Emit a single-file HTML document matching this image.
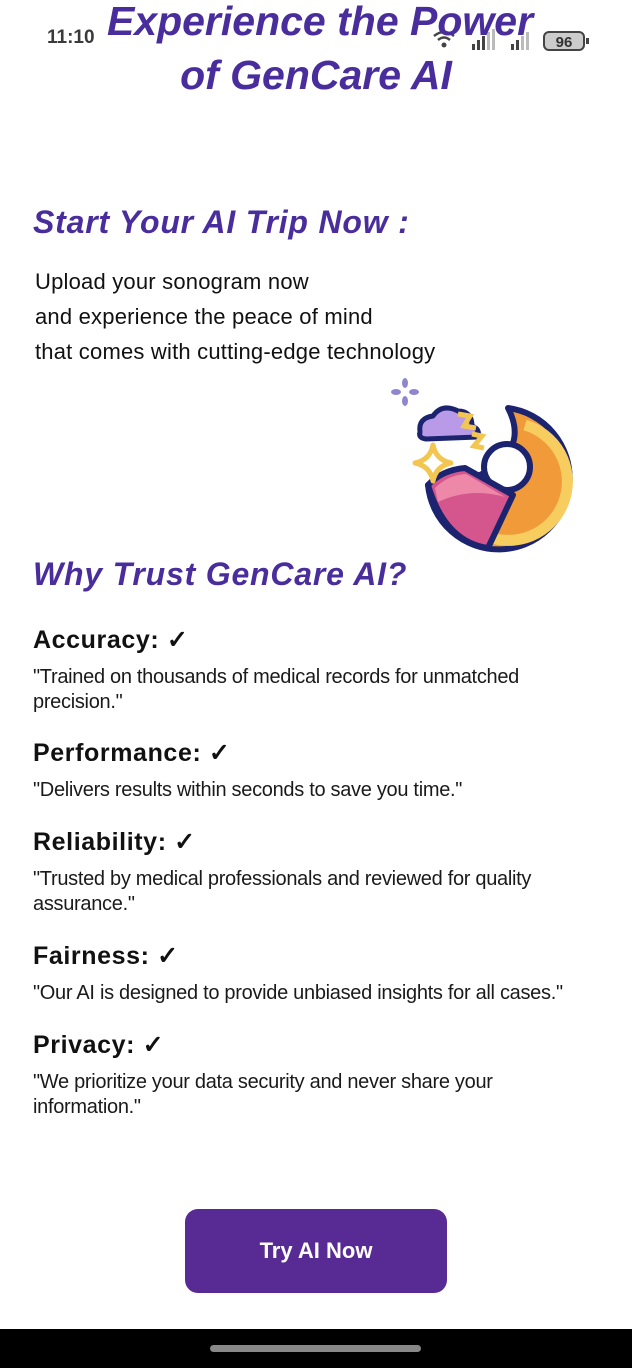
<!DOCTYPE html>
<html><head><meta charset="utf-8"><style>
html,body{margin:0;padding:0;background:#fff;}
body{width:632px;height:1368px;position:relative;overflow:hidden;font-family:"Liberation Sans",sans-serif;}
.a{position:absolute;white-space:nowrap;line-height:1;}
.t{font-weight:bold;font-style:italic;color:#4a2d9c;}
.h{font-weight:bold;color:#111;font-size:25px;left:33px;letter-spacing:0.6px;}
.q{font-size:20px;color:#1a1a1a;left:33px;letter-spacing:-0.3px;}
.b{font-size:22px;color:#111;left:35px;letter-spacing:0.2px;}
</style></head><body>
<div class="a" style="left:47px;top:28px;font-size:19px;font-weight:bold;color:#3a3a3a;">11:10</div>
<svg class="a" style="left:430px;top:26px" width="165" height="28" viewBox="0 0 165 28">
<path d="M4 10 Q14 2 24 10" stroke="#444" stroke-width="2.5" fill="none"/>
<path d="M8 14 Q14 9 20 14" stroke="#444" stroke-width="2.5" fill="none"/>
<circle cx="14" cy="19" r="2.5" fill="#444"/>
<rect x="42" y="18" width="3" height="6" fill="#444"/><rect x="47" y="14" width="3" height="10" fill="#444"/><rect x="52" y="10" width="3" height="14" fill="#444"/><rect x="57" y="6" width="3" height="18" fill="#bbb"/><rect x="62" y="3" width="3" height="21" fill="#bbb"/>
<rect x="81" y="18" width="3" height="6" fill="#444"/><rect x="86" y="14" width="3" height="10" fill="#444"/><rect x="91" y="10" width="3" height="14" fill="#bbb"/><rect x="96" y="6" width="3" height="18" fill="#bbb"/>
<rect x="114" y="6" width="40" height="18" rx="5" fill="#ccc" stroke="#444" stroke-width="2"/>
<text x="134" y="21" text-anchor="middle" font-family="Liberation Sans" font-size="15" font-weight="bold" fill="#333">96</text>
<rect x="156" y="12" width="3" height="6" fill="#444"/>
</svg>
<div class="a t" style="left:0;width:632px;text-align:center;top:1px;font-size:41px;padding-left:4px;">Experience the Power</div>
<div class="a t" style="left:0;width:632px;text-align:center;top:55px;font-size:41px;">of GenCare AI</div>
<div class="a t" style="left:33px;top:206px;font-size:32px;letter-spacing:0.8px;">Start Your AI Trip Now :</div>
<div class="a b" style="top:271px;">Upload your sonogram now</div>
<div class="a b" style="top:306px;">and experience the peace of mind</div>
<div class="a b" style="top:341px;">that comes with cutting-edge technology</div>
<svg class="a" style="left:380px;top:370px" width="200" height="190" viewBox="0 0 200 190">
<g fill="#8f86d0"><ellipse cx="25" cy="13" rx="3" ry="5"/><ellipse cx="25" cy="31" rx="3" ry="5"/><ellipse cx="16" cy="22" rx="5" ry="3"/><ellipse cx="34" cy="22" rx="5" ry="3"/></g>
<path d="M128 38 A71 71 0 1 1 48 115 L100 105 Q150 80 128 38 Z" fill="#f09a3a" stroke="#1c2470" stroke-width="6" stroke-linejoin="round"/>
<path d="M145 55 A55 55 0 0 1 112 168" stroke="#f7cd60" stroke-width="11" fill="none"/>
<circle cx="127" cy="97" r="23" fill="#fff" stroke="#1c2470" stroke-width="6"/>
<path d="M48 115 Q62 100 85 98 L133 125 L108 178 Q65 172 48 115 Z" fill="#d4568d" stroke="#1c2470" stroke-width="6" stroke-linejoin="round"/>
<path d="M55 118 Q68 105 86 104 L125 127 Q90 117 58 132 Z" fill="#ee88a8"/>
<path d="M40 62 Q38 48 53 46 Q62 33 78 41 Q92 41 92 56 Q100 59 98 67 L46 69 Q38 68 40 62 Z" fill="#b89ae8" stroke="#1c2470" stroke-width="5" stroke-linejoin="round"/>
<path d="M78 44 L90 46 L84 56 L96 58" stroke="#f3c652" stroke-width="5" fill="none"/>
<path d="M92 64 L102 66 L94 76 L104 78" stroke="#f3c652" stroke-width="5" fill="none"/>
<path d="M53 75 Q56 90 71 93 Q56 96 53 111 Q50 96 35 93 Q50 90 53 75 Z" fill="#fff" stroke="#f3c652" stroke-width="5" stroke-linejoin="round"/>
</svg>
<div class="a t" style="left:33px;top:558px;font-size:32px;letter-spacing:0.8px;">Why Trust GenCare AI?</div>
<div class="a h" style="top:628px;">Accuracy: ✓</div>
<div class="a q" style="top:667px;">"Trained on thousands of medical records for unmatched</div>
<div class="a q" style="top:692px;">precision."</div>
<div class="a h" style="top:741px;">Performance: ✓</div>
<div class="a q" style="top:780px;">"Delivers results within seconds to save you time."</div>
<div class="a h" style="top:830px;">Reliability: ✓</div>
<div class="a q" style="top:869px;">"Trusted by medical professionals and reviewed for quality</div>
<div class="a q" style="top:894px;">assurance."</div>
<div class="a h" style="top:944px;">Fairness: ✓</div>
<div class="a q" style="top:983px;">"Our AI is designed to provide unbiased insights for all cases."</div>
<div class="a h" style="top:1033px;">Privacy: ✓</div>
<div class="a q" style="top:1072px;">"We prioritize your data security and never share your</div>
<div class="a q" style="top:1097px;">information."</div>
<div class="a" style="left:185px;top:1209px;width:262px;height:84px;background:#582a93;border-radius:13px;color:#fff;font-weight:bold;font-size:22px;line-height:84px;text-align:center;">Try AI Now</div>
<div class="a" style="left:0;top:1329px;width:632px;height:39px;background:#000;"></div>
<div class="a" style="left:210px;top:1345px;width:211px;height:7px;border-radius:4px;background:#888;"></div>
</body></html>
